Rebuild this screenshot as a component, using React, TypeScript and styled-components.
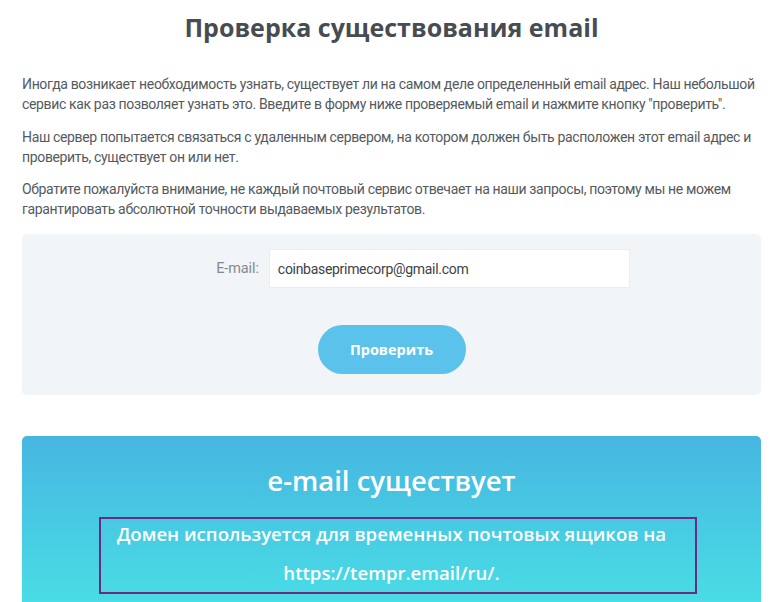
import React from "react";
import styled, { createGlobalStyle } from "styled-components";

const Global = createGlobalStyle`
  html, body { margin: 0; padding: 0; background: #ffffff; }
  body { font-family: "Open Sans", "Liberation Sans", sans-serif; }
  * { box-sizing: border-box; }
`;

const Page = styled.div`
  width: 739px;
  margin-left: 22px;
  display: flex;
  flex-direction: column;
`;

const Title = styled.h1`
  margin: 12px 0 0;
  font-family: "Open Sans", sans-serif;
  font-weight: 700;
  font-size: 25px;
  line-height: 30px;
  color: #474c52;
  text-align: center;
`;

const Text = styled.p`
  margin: 0;
  font-family: "Roboto", sans-serif;
  font-size: 14px;
  letter-spacing: -0.35px;
  line-height: 20px;
  color: #555a60;
  & + & { margin-top: 12.5px; }
`;

const Intro = styled.div`
  margin-top: 32px;
  display: flex;
  flex-direction: column;
`;

const FormBox = styled.form`
  margin-top: 15px;
  background: #f2f5f7;
  border-radius: 5px;
  padding: 15px 0 21px;
  display: flex;
  flex-direction: column;
  align-items: center;
`;

const Row = styled.div`
  display: flex;
  align-items: center;
  gap: 10px;
  padding-left: 63px;
`;

const Label = styled.label`
  font-family: "Roboto", sans-serif;
  font-size: 14.5px;
  letter-spacing: -0.1px;
  color: #85898e;
`;

const Input = styled.input`
  width: 361px;
  height: 39px;
  border: 1px solid #ebeef0;
  background: #ffffff;
  padding: 0 8px;
  font-family: "Roboto", sans-serif;
  font-size: 14px;
  letter-spacing: -0.3px;
  color: #3d4247;
  outline: none;
`;

const Button = styled.button`
  margin-top: 37px;
  width: 148px;
  height: 49px;
  border: none;
  border-radius: 25px;
  background: #5bc3eb;
  color: #ffffff;
  font-family: "Open Sans", sans-serif;
  font-weight: 700;
  font-size: 14.5px;
  cursor: pointer;
`;

const Result = styled.section`
  margin-top: 41px;
  border-radius: 5px 5px 0 0;
  background: linear-gradient(180deg, #46b6e1 0%, #49dce5 100%);
  height: 166px;
  display: flex;
  flex-direction: column;
  align-items: center;
`;

const ResultTitle = styled.h2`
  margin: 29px 0 0;
  font-family: "Open Sans", sans-serif;
  font-weight: 600;
  font-size: 27.5px;
  line-height: 32px;
  color: #ffffff;
`;

const Notice = styled.div`
  margin-top: 20px;
  margin-left: 13px;
  width: 598px;
  height: 77px;
  border: 2px solid #6c2b7f;
  display: flex;
  flex-direction: column;
  align-items: center;
  padding-right: 13px;
`;

const NoticeText = styled.p`
  margin: -5px 0 0;
  font-family: "Open Sans", sans-serif;
  font-weight: 600;
  font-size: 18.6px;
  line-height: 39px;
  color: #ffffff;
  text-align: center;
  white-space: nowrap;
`;

export default function App() {
  return (
    <>
      <Global />
      <Page>
        <Title>Проверка существования email</Title>
        <Intro>
          <Text>
            Иногда возникает необходимость узнать, существует ли на самом деле определенный email адрес. Наш небольшой
            сервис как раз позволяет узнать это. Введите в форму ниже проверяемый email и нажмите кнопку "проверить".
          </Text>
          <Text>
            Наш сервер попытается связаться с удаленным сервером, на котором должен быть расположен этот email адрес и
            проверить, существует он или нет.
          </Text>
          <Text>
            Обратите пожалуйста внимание, не каждый почтовый сервис отвечает на наши запросы, поэтому мы не можем
            гарантировать абсолютной точности выдаваемых результатов.
          </Text>
        </Intro>
        <FormBox onSubmit={(e) => e.preventDefault()}>
          <Row>
            <Label htmlFor="email">E-mail:</Label>
            <Input id="email" defaultValue="coinbaseprimecorp@gmail.com" />
          </Row>
          <Button type="submit">Проверить</Button>
        </FormBox>
        <Result>
          <ResultTitle>e-mail существует</ResultTitle>
          <Notice>
            <NoticeText>
              Домен используется для временных почтовых ящиков на
              <br />
              https://tempr.email/ru/.
            </NoticeText>
          </Notice>
        </Result>
      </Page>
    </>
  );
}
